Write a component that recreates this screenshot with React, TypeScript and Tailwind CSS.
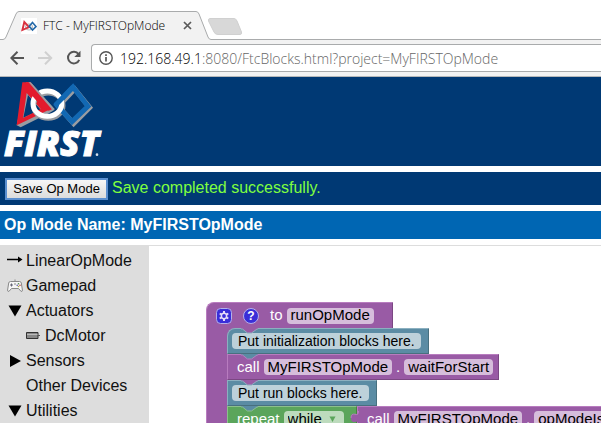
import type { ReactNode } from 'react';

const UI_FONT = "font-['Open_Sans','Noto_Sans',sans-serif]";

function FirstLogo() {
  return (
    <svg className="block h-[89px] w-[130px]" viewBox="0 6 390 267" role="img" aria-label="FIRST">
      <path d="M78 22 L92 22 L164 104 L152 112 L62 157 L50 151 Z M84 60 L70 128 L122 104 Z" fillRule="evenodd" fill="#9a9da2" />
      <path d="M67 22 L84 22 L152 102 L50 151 Z M80 54 L69 129 L122 102 Z" fillRule="evenodd" fill="#e31b2d" />
      <ellipse cx="145" cy="92" rx="44" ry="38" fill="none" stroke="#9a9da2" strokeWidth="15" />
      <path d="M224 42 L269 98 L221 146 L175 94 Z" fill="none" stroke="#9a9da2" strokeWidth="15" />
      <path d="M219 36 L264 94 L216 140 L170 89 Z" fill="none" stroke="#1268b3" strokeWidth="15" />
      <ellipse cx="142" cy="86" rx="43" ry="38" fill="none" stroke="#fff" strokeWidth="15" />
      <path d="M78 22 L92 22 L158 102 L146 107 L128 99 L76 38 Z" fill="#e31b2d" />
      <path d="M92 22 L164 102 L158 106 L86 22 Z" fill="#9a9da2" />
      <path d="M219 36 L166 91" fill="none" stroke="#1268b3" strokeWidth="15" />
      <text x="12" y="244" fill="#fff" stroke="#fff" strokeWidth="3" fontSize="107" fontWeight="800" fontStyle="italic" fontFamily="Open Sans, sans-serif">FIRST</text>
      <circle cx="291" cy="239" r="4" fill="#d5dfeb" />
    </svg>
  );
}

function TabIcon() {
  return (
    <svg className="h-4 w-4 shrink-0 bg-white" viewBox="0 0 16 16" aria-hidden="true">
      <ellipse cx="8" cy="9" rx="3.4" ry="3" fill="none" stroke="#bbb" strokeWidth="1.2" />
      <path d="M3.3 4 L1.4 12 L8 9.2 Z" fill="none" stroke="#d9303e" strokeWidth="1.9" />
      <path d="M11.5 4.5 L15 8.5 L11.5 12 L8.2 8.3 Z" fill="none" stroke="#2368a8" strokeWidth="1.6" />
    </svg>
  );
}

function Browser() {
  return (
    <header className={`${UI_FONT} shrink-0`}>
      <div className="flex h-10 items-end">
        <div className="relative h-[29px] w-[211px] shrink-0">
          <svg className="absolute inset-0 h-[29px] w-[211px]" viewBox="0 0 211 29" aria-hidden="true">
            <path d="M0 28.5 H3 Q5 28.5 6 26 L16 3 Q17 .5 19 .5 H196 Q198 .5 199 3 L208 26 Q209 28.5 211 28.5 V29 H0Z" fill="#f2f2f2" />
            <path d="M0 28.5 H3 Q5 28.5 6 26 L16 3 Q17 .5 19 .5 H196 Q198 .5 199 3 L208 26 Q209 28.5 211 28.5" fill="none" stroke="#a9abac" />
          </svg>
          <div className="relative flex h-[29px] items-center pl-[21px]">
            <TabIcon />
            <span className="ml-1.5 w-[140px] whitespace-nowrap text-[12px] font-light text-black">FTC - MyFIRSTOpMode</span>
            <button aria-label="Close tab" className="h-[9px] w-[9px]">
              <svg viewBox="0 0 9 9" className="block h-[9px] w-[9px]"><path d="M1 1 8 8M8 1 1 8" stroke="#5a5a5a" strokeWidth="1.7" /></svg>
            </button>
          </div>
        </div>
        <div className="flex h-full flex-1 items-end border-b border-[#a9abac]">
          <button aria-label="New tab" className="mb-1 ml-[-4px] h-[17px] w-[36px]">
            <svg className="block h-[17px] w-[36px]" viewBox="0 0 36 17"><path d="M3 .5 H27 Q29 .5 30 3 L34.5 14 Q35 16.5 33 16.5 H11 Q8 16.5 7 14 L1.5 3 Q1 .5 3 .5Z" fill="#d8d8d8" stroke="#d0d0d0" /></svg>
          </button>
        </div>
      </div>
      <div className="flex h-[37px] items-center border-b border-[#b5b8ba] bg-[#f2f2f2] pl-2.5">
        <button aria-label="Back"><svg className="block h-4 w-4" viewBox="0 0 16 16"><path d="M14 8H1.5M7.5 1.8 1.3 8l6.2 6.2" fill="none" stroke="#555" strokeWidth="2" /></svg></button>
        <button aria-label="Forward" className="ml-3"><svg className="block h-4 w-4" viewBox="0 0 16 16"><path d="M0 8h13M7 1.8 13.2 8 7 14.2" fill="none" stroke="#d0d0d0" strokeWidth="2" /></svg></button>
        <button aria-label="Reload" className="ml-3"><svg className="block h-4 w-4" viewBox="0 0 16 16"><path d="M12.5 4.2A5.8 5.8 0 1 0 13.2 9.8" fill="none" stroke="#555" strokeWidth="2" /><path d="M14.5 .8V7H8.3Z" fill="#555" /></svg></button>
        <div className="ml-[9px] flex h-7 flex-1 items-center rounded-l-sm border border-r-0 border-[#a9abac] bg-white pl-[7px]">
          <svg className="h-3.5 w-3.5 shrink-0" viewBox="0 0 14 14" aria-hidden="true"><circle cx="7" cy="7" r="6.2" fill="none" stroke="#555" strokeWidth="1.4" /><path d="M7 6v4.5M7 3.2v1.7" stroke="#555" strokeWidth="1.7" /></svg>
          <span className="ml-[7px] whitespace-nowrap text-[14px] font-light text-[#666]"><span className="text-black">192.168.49.1</span>:8080/FtcBlocks.html?project=MyFIRSTOpMode</span>
        </div>
      </div>
    </header>
  );
}

function Gamepad() {
  return (
    <svg className="h-4 w-4" viewBox="0 0 16 16" aria-hidden="true">
      <path d="M3.5 3.5H12.5Q14 3.5 14.3 5L15.4 12Q15.5 13.6 14.2 13.5L11.5 10.5H4.5L1.8 13.5Q.5 13.6 .6 12L1.7 5Q2 3.5 3.5 3.5Z" fill="#f6f6f6" stroke="#888" />
      <path d="M3 7h3M4.5 5.5v3" stroke="#667" strokeWidth="1" />
      <path d="M7 6h2M8 3.5V1.5" stroke="#888" />
      <circle cx="11.5" cy="5.8" r=".8" fill="#4a8a4a" /><circle cx="13" cy="7.2" r=".8" fill="#b44" /><circle cx="10.2" cy="7.2" r=".8" fill="#55a" /><circle cx="11.5" cy="8.5" r=".8" fill="#aa4" />
    </svg>
  );
}

const arrow = <svg className="h-4 w-4" viewBox="0 0 16 16" aria-hidden="true"><path d="M0 6.5H13" stroke="#000" strokeWidth="1.5" /><path d="M11 3.5 15.5 6.5 11 9.5Z" /></svg>;
const open = <svg className="h-4 w-4" viewBox="0 0 16 16" aria-hidden="true"><path d="M1.5 2.5H14.5L8 13.5Z" /></svg>;
const closed = <svg className="h-4 w-4" viewBox="0 0 16 16" aria-hidden="true"><path d="M3 2V14L14 8Z" /></svg>;
const motor = <svg className="h-4 w-4" viewBox="0 0 16 16" aria-hidden="true"><path d="M.5 4.5H12V10.5H.5Z" fill="#888" stroke="#333" /><path d="M1 6.5H11.5" stroke="#bbb" /><path d="M12 7.5H14" stroke="#555" /></svg>;

const categories: { label: string; icon?: ReactNode; nested?: boolean }[] = [
  { label: 'LinearOpMode', icon: arrow },
  { label: 'Gamepad', icon: <Gamepad /> },
  { label: 'Actuators', icon: open },
  { label: 'DcMotor', icon: motor, nested: true },
  { label: 'Sensors', icon: closed },
  { label: 'Other Devices' },
  { label: 'Utilities', icon: open },
];

function Toolbox() {
  return (
    <ul className="w-[149px] shrink-0 bg-[#ddd] pt-[3px]">
      {categories.map(({ label, icon, nested }) => (
        <li key={label} className={`flex h-[25px] items-center whitespace-nowrap text-[16px] text-[#111] ${nested ? 'pl-[26px]' : 'pl-[7px]'}`}>
          <span className="mr-[3px] h-4 w-4 shrink-0">{icon}</span>{label}
        </li>
      ))}
    </ul>
  );
}

const Field = ({ children }: { children: ReactNode }) => (
  <span className="flex h-4 items-center rounded-[4px] bg-white/60 px-1 text-black">{children}</span>
);

const Comment = ({ children }: { children: ReactNode }) => (
  <span className="flex h-4 items-center rounded-[4px] bg-white/60 px-1.5 text-[14px] text-black">{children}</span>
);

function Notch({ color, edge }: { color: string; edge: string }) {
  return (
    <svg className="absolute left-[13px] top-[-1px] h-[6px] w-[17px]" viewBox="0 0 17 6" aria-hidden="true">
      <path d="M0 0H17V1L10.5 5H6.5L1 1H0Z" fill={color} />
      <path d="M0 1H1.5L6.5 5H10.5L16 1H17" fill="none" stroke={edge} />
    </svg>
  );
}

const purple = 'border-t-[#b87cbf] border-l-[#b87cbf] border-b-[#7b4783] border-r-[#7b4783] bg-[#995ba5]';
const teal = 'border-t-[#8cb0c0] border-l-[#8cb0c0] border-b-[#48707f] border-r-[#48707f] bg-[#5b8ca4]';
const green = 'border-t-[#8cc08c] border-l-[#8cc08c] border-b-[#48803f] border-r-[#48803f] bg-[#5ba55b]';
const row = 'relative flex h-[26px] shrink-0 items-center border text-[15px] text-white whitespace-nowrap';

function Blocks() {
  return (
    <div className="ml-[57px] mt-[56px] w-max font-['Liberation_Sans',Arial,sans-serif]">
      <div className={`${row} ${purple} w-max rounded-tl-lg border-b-0 pl-[9px] pr-[18px]`}>
        <button aria-label="Edit inputs">
          <svg className="block h-4 w-4" viewBox="0 0 16 16">
            <rect x=".5" y=".5" width="15" height="15" rx="4" fill="#3a2ed8" stroke="#b4b0ea" />
            <g stroke="#e6dcf8" strokeWidth="2"><path d="M8 3V13M3.7 5.5 12.3 10.5M12.3 5.5 3.7 10.5" /></g>
            <circle cx="8" cy="8" r="3.4" fill="#e6dcf8" /><circle cx="8" cy="8" r="1.9" fill="#3a2ed8" />
          </svg>
        </button>
        <button aria-label="Help" className="ml-[11px] flex h-4 w-4 items-center justify-center rounded-full border border-[#b4b0ea] bg-[#3a2ed8] text-[12px] font-bold">?</button>
        <span className="ml-[11px] mr-1">to</span>
        <Field>runOpMode</Field>
      </div>
      <div className="border-l border-l-[#b87cbf] bg-linear-to-r from-[#995ba5] from-[30px] to-transparent to-[30px] pl-5">
        <div className={`${row} ${teal} w-max rounded-tl-lg pl-1 pr-[7px]`}>
          <Notch color="#995ba5" edge="#8cb0c0" />
          <Comment>Put initialization blocks here.</Comment>
        </div>
        <div className={`${row} ${purple} w-max pl-[9px] pr-[5px]`}>
          <Notch color="#5b8ca4" edge="#b87cbf" />
          call<span className="w-1" /><Field>MyFIRSTOpMode</Field><span className="mx-1">.</span><Field>waitForStart</Field>
        </div>
        <div className={`${row} ${teal} w-max pl-1 pr-[7px]`}>
          <Notch color="#995ba5" edge="#8cb0c0" />
          <Comment>Put run blocks here.</Comment>
        </div>
        <div className="flex w-max">
          <div className={`${row} ${green} w-[130px] pl-[9px]`}>
            <Notch color="#5b8ca4" edge="#8cc08c" />
            <label htmlFor="loop-mode" className="mr-1">repeat</label>
            <span className="relative flex h-4 items-center rounded-[4px] bg-white/60">
              <select id="loop-mode" className="h-4 w-[60px] appearance-none bg-transparent pl-1 text-[15px] leading-4 text-black"><option>while</option></select>
              <svg className="pointer-events-none absolute right-2 top-1 h-2 w-[7px]" viewBox="0 0 7 8" aria-hidden="true"><path d="M.5 1.5H6.5L3.5 7Z" fill="#5ba55b" /></svg>
            </span>
          </div>
          <div className={`${row} ${purple} pl-[9px] pr-1`}>
            <svg className="absolute left-[-8px] top-1 h-4 w-[9px]" viewBox="0 0 9 16" aria-hidden="true"><path d="M9 0V1C9 7 1 -1 1 7S9 7 9 14V16Z" fill="#995ba5" /><path d="M8.5 0V1C8.5 7 1 -1 1 7" fill="none" stroke="#b87cbf" /></svg>
            call<span className="w-1" /><Field>MyFIRSTOpMode</Field><span className="mx-1">.</span><Field>opModeIsActive</Field>
          </div>
        </div>
      </div>
    </div>
  );
}

export default function App() {
  return (
    <div className="flex h-screen flex-col overflow-hidden bg-white font-['Liberation_Sans',Arial,sans-serif]">
      <Browser />
      <div className="shrink-0 bg-[#003974]"><FirstLogo /></div>
      <div className="mt-1.5 flex h-[33px] shrink-0 items-center bg-[#003974] px-[5px]">
        <button className="h-[22px] w-[103px] whitespace-nowrap border-2 border-[#5a8fd0] bg-linear-to-b from-[#f6f6f6] to-[#dcdcdc] text-[13px] leading-4 text-black">Save Op Mode</button>
        <span role="status" className="ml-1 pb-0.5 text-[16px] text-[#7fff3f]">Save completed successfully.</span>
      </div>
      <h1 className="mt-1.5 h-7 shrink-0 bg-[#0066b3] px-1 text-[16px] font-bold leading-[27px] text-white">Op Mode Name: MyFIRSTOpMode</h1>
      <main className="mt-1.5 flex min-h-0 flex-1">
        <Toolbox />
        <section aria-label="Workspace" className="min-w-0 flex-1 overflow-hidden border-t border-[#ddd]"><Blocks /></section>
      </main>
    </div>
  );
}
